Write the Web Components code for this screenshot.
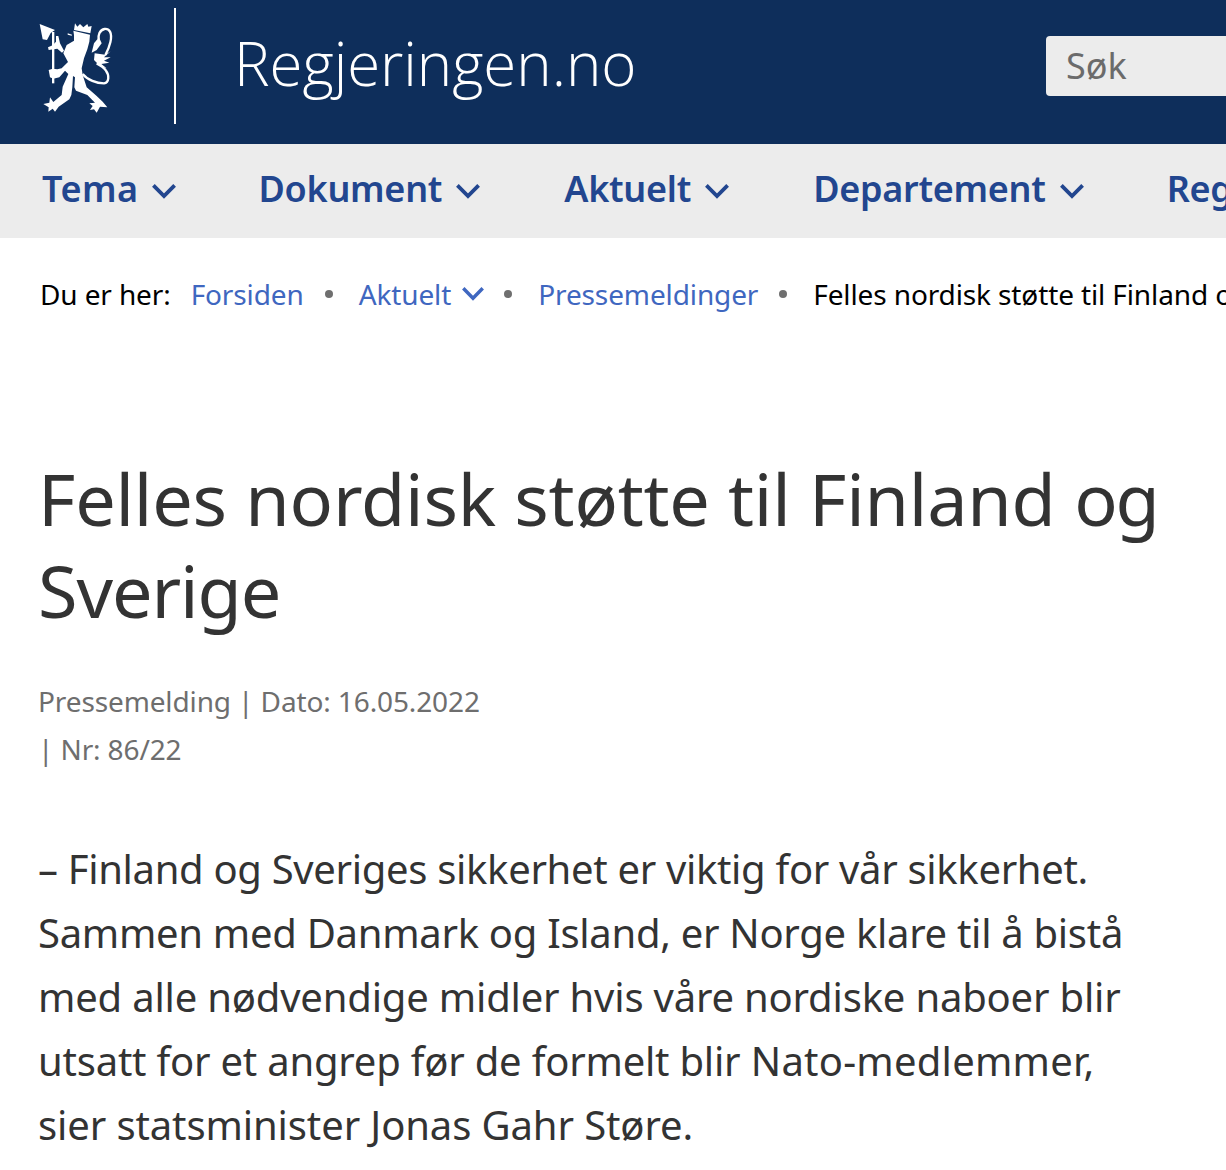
<!DOCTYPE html>
<html lang="no"><head><meta charset="utf-8"><title>Regjeringen.no</title>
<style>
html,body{margin:0;padding:0;background:#fff;overflow:hidden}
body{width:1226px;height:1170px;font-family:"Noto Sans","Open Sans",sans-serif;color:#333}
</style></head><body>
<site-header></site-header>
<main-nav>
<nav-item style="letter-spacing:.45px;margin-right:-2px">Tema</nav-item><nav-item>Dokument</nav-item><nav-item>Aktuelt</nav-item><nav-item style="margin-right:-1px">Departement</nav-item><nav-item nochev>Regjeringen</nav-item>
</main-nav>
<bread-crumbs></bread-crumbs>
<news-article></news-article>
<script>
const chev=(w,h,sw)=>`<svg width="${w}" height="${h}" viewBox="0 0 24 16" preserveAspectRatio="none" fill="none" stroke="currentColor" stroke-width="${sw}" aria-hidden="true"><path d="M1.4 2.4 12 13 22.6 2.4"/></svg>`;
function def(name,html){customElements.define(name,class extends HTMLElement{constructor(){super();this.attachShadow({mode:'open'}).innerHTML=html;}});}
def('site-header',`<style>
:host{display:flex;align-items:flex-start;height:144px;background:#0e2e5b;box-sizing:border-box;overflow:hidden}
.logo{margin:22px 0 0 37px;flex:none;width:80px;height:92px}
.div{flex:none;width:2px;height:116px;background:#fff;margin:8px 0 0 57px}
.t{flex:none;margin:20px 0 0 58px;font:300 60px/86px "Open Sans",sans-serif;color:#fff;letter-spacing:-.05px}
.s{flex:none;margin:36px 0 0 auto;width:180px;height:60px;box-sizing:border-box;background:#ececec;border-radius:4px 0 0 4px;padding-left:20px;font:36px/60px "Noto Sans",sans-serif;color:#6b6b6b}
</style>
<svg class="logo" viewBox="111 66 240 276" aria-label="Riksløven">
<g fill="#fff">
<path d="M119 72 165 90 152 99 141 120 128 118Z"/>
<path d="M156 96h7v154h-7z"/>
<path d="M168 108 175 108 180 130 192 152 186 158 172 146 146 150 144 142 158 136 168 125Z"/>
<path d="M225 70 232 80 240 72 250 82 262 72 265 80 275 78 271 100 222 90Z"/>
<path d="M220 92 270 104 268 125 262 148 252 175 245 205 248 225 260 262 290 288 308 305 322 322 300 320 290 338 282 328 270 330 278 318 268 310 285 308 262 285 228 272 223 262 225 232 219 228 217 262 214 285 208 298 176 320 165 335 158 326 145 335 146 322 130 312 148 308 150 292 160 306 185 285 188 260 197 240 205 222 195 212 178 232 160 236 150 232 146 210 158 206 172 208 185 205 204 186 190 160 200 135 222 122 222 105Z"/>
<path d="M203 100 216 104 215 107 203 104Z"/>
<path d="M297 112 305 130 290 150 275 158 282 130Z"/>
<path d="M284 160 316 164 332 154 312 172 332 172 312 182 328 188 304 192 320 205 300 198 282 180Z"/>
</g>
<g fill="none" stroke="#fff" stroke-width="7">
<path d="M248 222C262 240 290 250 312 250 328 248 328 225 318 212 310 200 300 195 290 190"/>
<path d="M316 165C330 140 338 110 330 95 322 82 305 85 298 100 294 110 296 115 296 118"/>
</g>
</svg>
<div class="div"></div><div class="t">Regjeringen.no</div><div class="s">Søk</div>`);
def('main-nav',`<style>
:host{display:flex;height:94px;background:#ececec;padding-left:42px;gap:84px;overflow:hidden;white-space:nowrap;align-items:flex-start;letter-spacing:-.27px}
</style><slot></slot>`);
customElements.define('nav-item',class extends HTMLElement{constructor(){super();const c=this.hasAttribute('nochev')?'':chev(24,16,3.8);this.attachShadow({mode:'open'}).innerHTML=`<style>
:host{display:flex;flex:none;align-items:center;gap:14px;height:90px;font:600 36px/90px "Noto Sans",sans-serif;color:#22468f}
svg{margin-top:4px}
</style><slot></slot>${c}`;}});
def('bread-crumbs',`<style>
:host{display:flex;align-items:center;height:112px;margin-bottom:4px;padding-left:40px;box-sizing:border-box;white-space:nowrap;overflow:hidden;font:28px/112px "Noto Sans",sans-serif;color:#000;letter-spacing:-.12px}
a{color:#3f67c0;text-decoration:none;flex:none}
.l{margin-right:20px;flex:none}
.d{flex:none;width:8px;height:8px;border-radius:50%;background:#6f6f6f;margin:0 26px 0 21px}
svg{margin-left:11px;margin-top:-1px;color:#3f67c0;flex:none}
.a{display:flex;align-items:center;flex:none}
span{flex:none}
</style><span class="l">Du er her:</span><a>Forsiden</a><i class="d"></i><span class="a"><a>Aktuelt</a>${chev(22,15,3.8)}</span><i class="d" style="margin:0 26px 0 20px"></i><a>Pressemeldinger</a><i class="d"></i><span>Felles nordisk støtte til Finland og Sverige</span>`);
def('news-article',`<style>
:host{display:block;padding:98px 40px 0 38px;color:#333}
h1{margin:0;font:400 72px/92px "Noto Sans",sans-serif;color:#333}
.m{margin-top:41px;width:470px;font:28px/48px "Noto Sans",sans-serif;color:#6e6e6e;letter-spacing:-.12px}
p{margin:64px 0 0;font:40px/64px "Noto Sans",sans-serif;color:#333;width:1110px}
</style><h1><span style="letter-spacing:-.23px">Felles nordisk støtte til Finland</span> <span style="letter-spacing:-2.5px">og</span> <span style="letter-spacing:-1.1px">Sverige</span></h1>
<div class="m">Pressemelding | Dato: 16.05.2022<br>| Nr: 86/22</div>
<p><span style="letter-spacing:-.32px">– Finland og Sveriges sikkerhet er viktig for vår sikkerhet.</span> <span style="letter-spacing:-.29px">Sammen med Danmark og Island, er Norge klare til å bistå</span> <span style="letter-spacing:-.19px">med alle nødvendige midler hvis våre nordiske naboer blir</span> <span style="letter-spacing:-.22px">utsatt for et angrep før de formelt blir</span> <span style="letter-spacing:.24px">Nato-medlemmer,</span> <span style="letter-spacing:-.11px">sier statsminister Jonas Gahr Støre.</span></p>`);
</script>
</body></html>
